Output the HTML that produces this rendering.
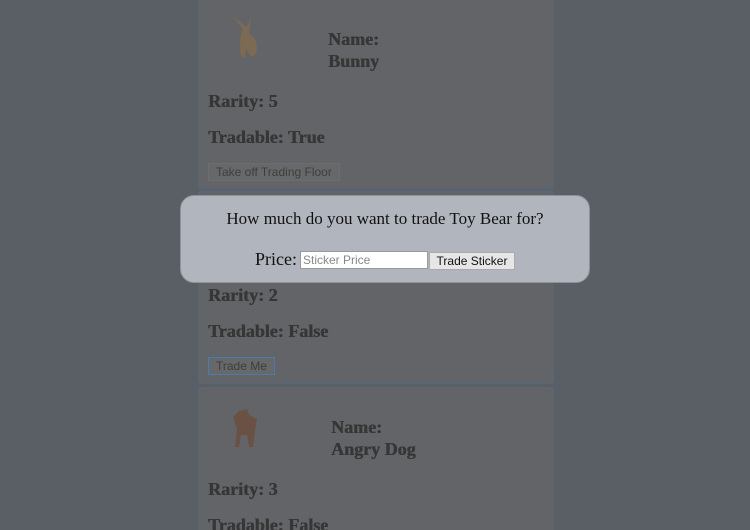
<!DOCTYPE html>
<html><head><style>
html,body{margin:0;width:750px;height:530px;overflow:hidden}
body{background:#5a5e65;font-family:"Liberation Serif",serif;position:relative}
.card{position:absolute;left:198px;width:354px;background:#636467;border:1px solid #56677a;border-radius:3px}
.t{position:absolute;font-weight:700;font-size:18px;color:#363637;line-height:22px;text-shadow:0.5px 0 0 #363637}
.btn{position:absolute;font-family:"Liberation Sans",sans-serif;font-size:12px;color:#3e3e3e;border:1px solid #6c6d70;background:#676869;padding:0 7px;height:16px;line-height:16px}
.modal{position:absolute;left:180px;top:195px;width:408px;height:86px;background:#b1b5be;border:1px solid #8e9299;border-radius:14px;text-align:center}
</style></head><body>
<div class="card" style="top:-5px;height:192px">
 <svg style="position:absolute;left:30px;top:17px" width="36" height="46" viewBox="0 0 36 46"><path d="M4 4 L14 16 L12 22 Q10 30 12 44 L16 44 L17 36 L22 44 L26 42 Q30 36 26 26 Q22 22 20 20 L22 4 L18 14 Z" fill="#7c6a52"/></svg>
 <div class="t" style="left:129px;top:32px">Name:<br>Bunny</div>
 <div class="t" style="left:9px;top:94px">Rarity: 5</div>
 <div class="t" style="left:9px;top:130px">Tradable: True</div>
 <div class="btn" style="left:9px;top:167px">Take off Trading Floor</div>
</div>
<div class="card" style="top:190px;height:192px">
 <div class="t" style="left:9px;top:93px">Rarity: 2</div>
 <div class="t" style="left:9px;top:129px">Tradable: False</div>
 <div class="btn" style="left:9px;top:166px;border-color:#4a7ab0">Trade Me</div>
</div>
<div class="card" style="top:387px;height:160px">
 <svg style="position:absolute;left:30px;top:17px" width="36" height="46" viewBox="0 0 36 46"><path d="M4 12 L10 6 L18 4 L20 10 L28 14 L26 26 L24 42 L20 42 L18 30 L12 30 L10 42 L6 42 L8 24 Z" fill="#6b5145"/></svg>
 <div class="t" style="left:132px;top:28px">Name:<br>Angry Dog</div>
 <div class="t" style="left:9px;top:90px">Rarity: 3</div>
 <div class="t" style="left:9px;top:126px">Tradable: False</div>
</div>
<div class="modal">
 <div style="position:absolute;left:0;right:0;top:13px;font-size:17px;color:#111">How much do you want to trade Toy Bear for?</div>
 <div style="position:absolute;left:74px;top:53px;font-size:18px;color:#111">Price:</div>
 <div style="position:absolute;left:119px;top:55px;width:124px;height:16px;background:#fff;border:1px solid #999;font-family:'Liberation Sans',sans-serif;font-size:12px;color:#888;line-height:16px;padding-left:2px;text-align:left">Sticker Price</div>
 <div style="position:absolute;left:248px;top:56px;width:84px;height:16px;background:#e6e6e6;border:1px solid #aaa;font-family:'Liberation Sans',sans-serif;font-size:12px;color:#111;line-height:16px">Trade Sticker</div>
</div>
</body></html>
